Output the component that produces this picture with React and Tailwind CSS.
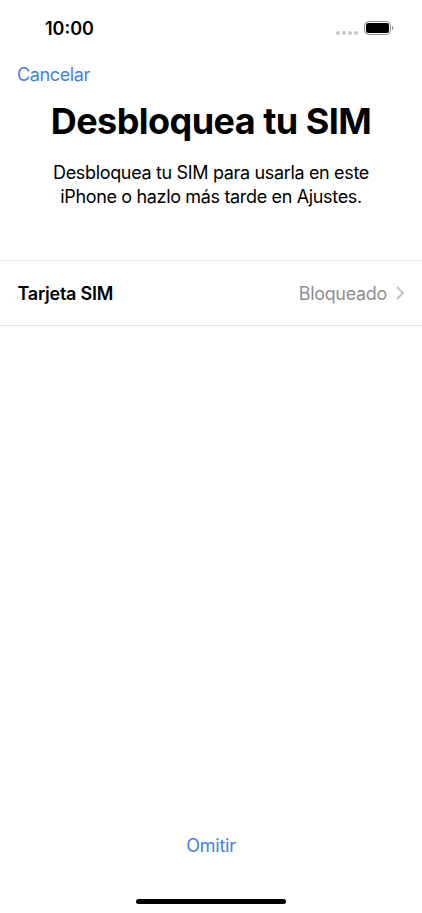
import React from 'react';

const StatusBar = () => (
  <div className="flex h-14 items-center justify-between pl-[45px] pr-[28px]">
    <span className="pt-[2px] text-[18px] leading-6 font-semibold">10:00</span>
    <div className="flex items-center gap-[6px]">
      {/* No signal */}
      <div className="flex gap-[2px] pt-[9px]">
        {[0, 1, 2, 3].map((dot) => (
          <span key={dot} className="h-[4px] w-[4px] rounded-full bg-[#c8c8c8]" />
        ))}
      </div>
      <svg className="h-[14px] w-[30px]" viewBox="0 0 30 14" fill="none">
        <rect x="0.5" y="0.5" width="26" height="13" rx="4" stroke="#8e8e8e" />
        <rect x="2" y="2" width="23" height="10" rx="2.2" fill="#000" />
        <path d="M28 4.800v4.400c.9-.4 1.400-1.200 1.400-2.200s-.5-1.800-1.400-2.200z" fill="#9a9a9a" />
      </svg>
    </div>
  </div>
);

const SimRow = ({ label, status }) => (
  <button className="mt-[51px] flex h-[66px] w-full items-center justify-between border-y border-[#e6e6e8] px-[17px] text-[18px] leading-6">
    <span className="pt-[2px] pl-[0.5px] font-semibold tracking-[-0.25px]">{label}</span>
    <span className="flex items-center gap-[9px] text-[#909093]">
      <span className="pt-[2px] tracking-[-0.32px]">{status}</span>
      <svg className="h-[14px] w-[9px]" viewBox="0 0 9 14" fill="none">
        <path d="M1.500 1.500L7 7l-5.500 5.500" stroke="#c4c4c6" strokeWidth="2" strokeLinecap="round" strokeLinejoin="round" />
      </svg>
    </span>
  </button>
);

const App = () => {
  return (
    <div className="flex h-[913px] w-[422px] flex-col bg-white font-['Inter',sans-serif] text-black">
      <StatusBar />
      <button className="ml-[17px] mt-[7px] self-start text-[18px] leading-6 tracking-[-0.38px] text-[#4583db]">
        Cancelar
      </button>
      <h1 className="mt-[12px] text-center text-[36px] leading-[44px] font-bold tracking-[-0.55px] whitespace-nowrap">
        Desbloquea tu SIM
      </h1>
      <p className="mt-[18px] text-center text-[18px] leading-6 tracking-[-0.34px]">
        Desbloquea tu SIM para usarla en este
        <br />
        iPhone o hazlo más tarde en Ajustes.
      </p>
      <SimRow label="Tarjeta SIM" status="Bloqueado" />

      <div className="mt-auto flex flex-col items-center">
        <button className="text-[18px] leading-6 tracking-[-0.2px] text-[#4583db]">Omitir</button>
        {/* Home indicator */}
        <div className="mt-[41px] mb-[9px] h-[5px] w-[150px] rounded-full bg-black" />
      </div>
    </div>
  );
};

export default App;
